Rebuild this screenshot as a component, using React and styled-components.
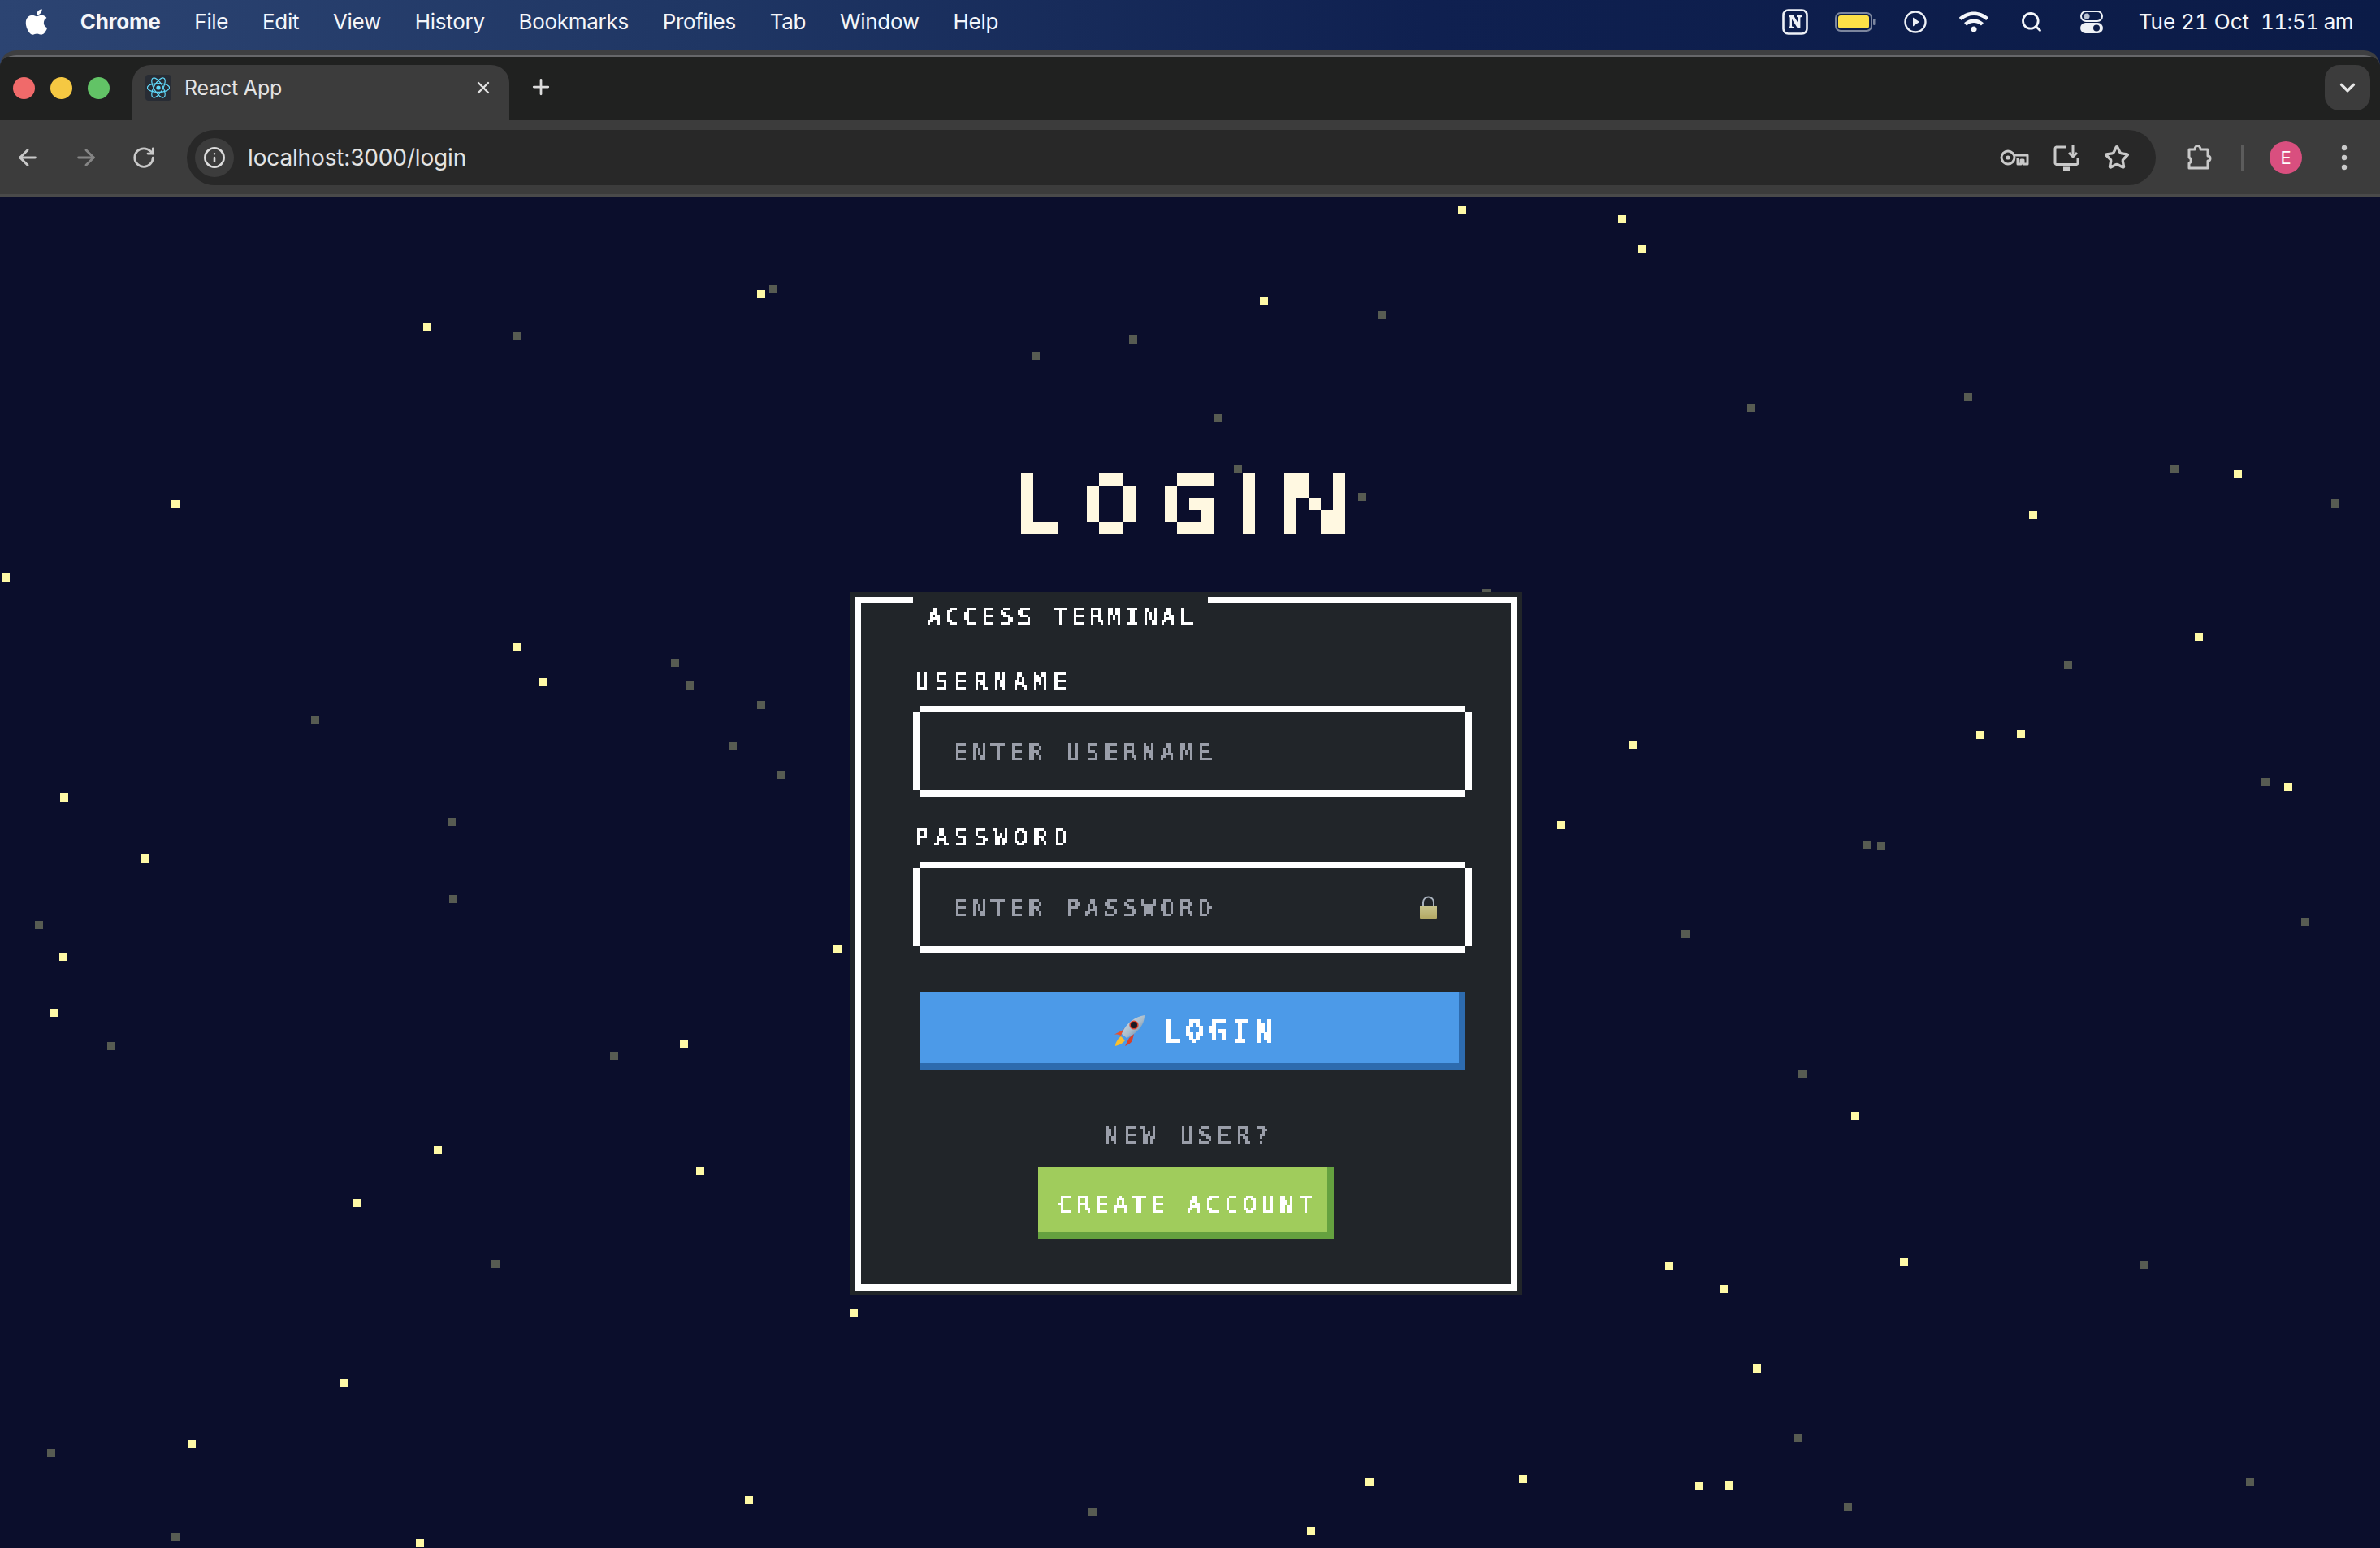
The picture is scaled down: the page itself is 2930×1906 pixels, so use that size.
import React from 'react';
import styled, { createGlobalStyle } from 'styled-components';
import { FaApple, FaWifi } from 'react-icons/fa';
import { ArrowLeft, ArrowRight, RotateCw, Info, X, Plus, ChevronDown, Search, Star as StarIcon } from 'lucide-react';

const Global = createGlobalStyle`
  html, body { margin: 0; padding: 0; background: #0b0e2c; }
  * { box-sizing: border-box; }
`;

const PIXEL_FILTERS = [
  { id: 'px-white', cell: 3, color: '#ffffff' },
  { id: 'px-gray', cell: 3, color: '#9a9ea9' },
  { id: 'px-login', cell: 4, color: '#ffffff' },
  { id: 'px-title', cell: 15, color: '#fff8e1' },
];

const PixelFilters = () => (
  <FilterDefs aria-hidden="true">
    <defs>
      {PIXEL_FILTERS.map(({ id, cell, color }) => {
        const c = Math.floor(cell / 2);
        return (
          <filter key={id} id={id} x="0" y="0" width="100%" height="100%" primitiveUnits="userSpaceOnUse" colorInterpolationFilters="sRGB">
            <feFlood x={c} y={c} width="1" height="1" floodColor="#000" result="dot" />
            <feComposite in="dot" in2="dot" width={cell} height={cell} x="0" y="0" result="cell" />
            <feTile in="cell" result="grid" />
            <feComposite in="SourceAlpha" in2="grid" operator="in" result="sampled" />
            <feComponentTransfer in="sampled" result="hard">
              <feFuncA type="discrete" tableValues="0 1" />
            </feComponentTransfer>
            <feMorphology in="hard" operator="dilate" radius={c} result="blocks" />
            <feFlood floodColor={color} result="ink" />
            <feComposite in="ink" in2="blocks" operator="in" />
          </filter>
        );
      })}
    </defs>
  </FilterDefs>
);

const FilterDefs = styled.svg`
  position: absolute;
  width: 0;
  height: 0;
`;

const Screen = styled.div`
  width: 2930px;
  height: 1906px;
  display: flex;
  flex-direction: column;
  overflow: hidden;
  background: linear-gradient(90deg, #2c4472 0%, #1f3664 30%, #0f2050 60%, #0b1b47 100%);
`;

const MenuBar = styled.header`
  height: 62px;
  flex: none;
  display: flex;
  align-items: center;
  justify-content: space-between;
  padding: 0 33px 8px 30px;
  color: #f4f6fa;
  font: 400 26px/1 Inter, "Liberation Sans", sans-serif;
`;

const MenuGroup = styled.nav`
  display: flex;
  align-items: center;
  gap: 41.8px;
`;

const AppleMark = styled(FaApple)`
  width: 30px;
  height: 36px;
  margin-right: -3px;
  color: #fff;
`;

const MenuItem = styled.span`
  font-weight: ${p => (p.$strong ? 700 : 400)};
  letter-spacing: -0.3px;
`;

const StatusGroup = styled.div`
  display: flex;
  align-items: center;
`;

const StatusSlot = styled.span`
  display: flex;
  margin-right: ${p => p.$after}px;
`;

const Clock = styled.span`
  display: flex;
  gap: 14px;
  white-space: pre;
  font-feature-settings: "tnum";
`;

const ClockPart = styled.span`
  letter-spacing: ${p => p.$track}px;
`;

const Browser = styled.div`
  flex: 1;
  display: flex;
  flex-direction: column;
  min-height: 0;
  border-radius: 20px 20px 0 0;
  overflow: hidden;
  background: #202120;
  border-top: 6px solid #3e3f41;
`;

const TabStrip = styled.div`
  height: 80px;
  flex: none;
  display: flex;
  align-items: flex-end;
  padding-left: 16px;
  background: #202120;
  border-top: 2px solid #66676a;
`;

const Light = styled.span`
  width: 27px;
  height: 27px;
  border-radius: 50%;
  background: ${p => p.$c};
  margin: 0 19px 26px 0;
  flex: none;
`;

const Tab = styled.div`
  width: 464px;
  height: 68px;
  margin-left: 9px;
  display: flex;
  align-items: center;
  padding: 0 20px 12px 16px;
  background: #3c3c3c;
  border-radius: 22px 22px 0 0;
  color: #e3e3e3;
  font: 400 25px/1 Inter, "Liberation Sans", sans-serif;
  letter-spacing: -0.2px;
`;

const Favicon = styled.span`
  width: 32px;
  height: 32px;
  border-radius: 4px;
  background: #282c34;
  margin-right: 16px;
  display: flex;
`;

const TabTitle = styled.span`
  flex: 1;
`;

const TabButton = styled.span`
  display: flex;
  color: #dcdcdc;
  margin-left: ${p => p.$gap || 0}px;
  margin-bottom: ${p => p.$lift || 0}px;
`;

const TabSpacer = styled.div`
  flex: 1;
`;

const ExpandChip = styled.span`
  width: 56px;
  height: 56px;
  margin: 0 12px 12px 0;
  border-radius: 18px;
  background: #3c3c3c;
  display: flex;
  align-items: center;
  justify-content: center;
  color: #e6e6e6;
`;

const Toolbar = styled.div`
  height: 94px;
  flex: none;
  display: flex;
  align-items: center;
  padding: 0 0 0 18px;
  background: #3c3c3c;
  border-bottom: 3px solid #4a4a4a;
`;

const NavSlot = styled.span`
  width: 72px;
  display: flex;
  color: ${p => (p.$dim ? '#858585' : '#c9c9c9')};
`;

const Omnibox = styled.div`
  width: 2424px;
  height: 68px;
  margin-left: -4px;
  display: flex;
  align-items: center;
  padding: 0 32px 0 10px;
  border-radius: 34px;
  background: #282828;
`;

const InfoChip = styled.span`
  width: 48px;
  height: 48px;
  border-radius: 50%;
  background: #3c3c3c;
  color: #dcdcdc;
  display: flex;
  align-items: center;
  justify-content: center;
  margin-right: 17px;
`;

const Url = styled.span`
  flex: 1;
  color: #e3e3e3;
  font: 400 28px/1 Inter, "Liberation Sans", sans-serif;
  letter-spacing: -0.15px;
`;

const OmniIcons = styled.div`
  display: flex;
  align-items: center;
  gap: 30px;
  color: #c9c9c9;
`;

const ToolEnd = styled.div`
  flex: 1;
  display: flex;
  align-items: center;
  padding-left: 38px;
  color: #c9c9c9;
`;

const ToolDivider = styled.span`
  width: 3px;
  height: 32px;
  background: #5c5c5c;
  margin: 0 32px 0 35px;
`;

const Avatar = styled.span`
  width: 40px;
  height: 40px;
  border-radius: 50%;
  background: #d94f7f;
  color: #fff;
  font: 400 22px/40px Inter, "Liberation Sans", sans-serif;
  text-align: center;
  margin-right: 48px;
`;

const Page = styled.main`
  flex: 1;
  position: relative;
  display: flex;
  flex-direction: column;
  align-items: center;
  padding: 0 10px 0 0;
  background: #0b0e2c;
  overflow: hidden;
`;

const StarDot = styled.i.attrs(p => ({
  style: { left: `${Math.round(p.$x * SCALE - 4)}px`, top: `${Math.round(p.$y * SCALE - 246)}px` },
}))`
  position: absolute;
  width: 10px;
  height: 10px;
  background: ${p => (p.$dim ? '#575b52' : '#fff9a6')};
`;

const Title = styled.h1`
  position: relative;
  margin: 341px 7px 0 0;
  height: 75px;
  display: flex;
  gap: 36px;
  font: 700 103px/75px "Liberation Sans", sans-serif;
  color: #fff8e1;
  -webkit-text-stroke: 2px #fff8e1;
`;

const TitleCell = styled.span`
  display: block;
  width: ${p => p.$w}px;
  height: 75px;
  filter: url(#px-title);
`;

const TitleGlyph = styled.span`
  display: inline-block;
  transform-origin: 0 0;
  transform: translateX(${p => -p.$dx * p.$sx}px) scaleX(${p => p.$sx});
`;

const Card = styled.form`
  position: relative;
  width: 816px;
  height: 854px;
  margin-top: 77px;
  padding: 82px 48px 0 64px;
  background: #212529;
  border: 8px solid #fff;
  box-shadow: 0 0 0 6px #212529;
  display: flex;
  flex-direction: column;
`;

const Legend = styled.div`
  position: absolute;
  left: 64px;
  top: -8px;
  width: 363px;
  height: 34px;
  background: #212529;
  padding: 10px 0 0 18px;
`;

const PixelText = styled.span`
  display: inline-block;
  white-space: nowrap;
  font: 400 ${p => p.$size || 28}px/${p => p.$line || 30}px "DejaVu Sans Mono", monospace;
  -webkit-text-stroke: 0.8px ${p => (p.$gray ? '#9a9ea9' : '#fff')};
  letter-spacing: ${p => p.$track ?? 6.3}px;
  color: ${p => (p.$gray ? '#9a9ea9' : '#fff')};
  filter: url(${p => p.$filter || (p.$gray ? '#px-gray' : '#px-white')});
`;

const NewUserText = styled(PixelText)`
  margin-left: 7px;
`;

const Field = styled.div`
  display: flex;
  flex-direction: column;
  align-items: flex-start;
  margin-bottom: ${p => p.$after}px;
`;

const FieldLabel = styled.label`
  margin: 0 0 14px 2px;
  display: flex;
`;

const InputFrame = styled.div`
  align-self: stretch;
  margin: 8px;
  height: 96px;
  display: flex;
  align-items: center;
  padding: 0 35px 0 42px;
  background: #212529;
  box-shadow: 8px 0 #fff, -8px 0 #fff, 0 8px #fff, 0 -8px #fff;
`;

const Hint = styled.div`
  flex: 1;
  display: flex;
  padding-top: ${p => p.$drop}px;
`;

const PrimaryButton = styled.button`
  align-self: stretch;
  margin: 0 8px;
  height: 96px;
  flex: none;
  border: 0;
  padding: 0 0 0 8px;
  display: flex;
  align-items: center;
  justify-content: center;
  gap: 22px;
  background: #4c9ae8;
  box-shadow: inset -8px -8px 0 #2d6bae;
`;

const Footer = styled.div`
  margin-top: 67px;
  display: flex;
  flex-direction: column;
  align-items: center;
  gap: 23px;
  transform: translateX(-8px);
`;

const SecondaryButton = styled.button`
  width: 364px;
  height: 88px;
  border: 0;
  padding: 6px 0 0 4px;
  display: flex;
  align-items: center;
  justify-content: center;
  background: #a0cc5c;
  box-shadow: inset -8px -8px 0 #65a13f;
`;

const SCALE = 2930 / 1568;

const TITLE_LETTERS = [
  { ch: 'L', w: 45, sx: 0.857, dx: 7.5 },
  { ch: 'O', w: 60, sx: 0.83, dx: 4 },
  { ch: 'G', w: 60, sx: 0.87, dx: 5 },
  { ch: 'I', w: 15, sx: 1, dx: 7 },
  { ch: 'N', w: 75, sx: 1.25, dx: 7 },
];

const BRIGHT = [[963,138],[1068,144],[1081,164],[832,198],[501,193],[281,215],[115,332],[3,380],[340,426],[357,449],[42,525],[95,565],[41,630],[35,667],[551,625],[450,687],[288,757],[461,771],[235,792],[226,911],[126,951],[493,988],[276,1016],[562,865],[902,976],[1003,974],[863,1008],[1119,979],[1139,978],[1157,901],[1135,849],[1099,834],[1254,831],[1222,735],[1075,490],[1028,543],[1304,484],[1331,483],[1448,419],[1507,518],[1474,312],[1339,339],[675,333]];
const DIM = [[509,190],[340,221],[682,234],[746,223],[910,207],[802,275],[815,308],[897,327],[1153,268],[1296,261],[1432,308],[1538,331],[1362,438],[1492,515],[1518,607],[1229,556],[1239,557],[1110,615],[1187,707],[1412,833],[1184,947],[1482,976],[1217,992],[719,996],[115,1012],[33,957],[326,832],[73,689],[404,695],[25,609],[298,592],[297,541],[207,474],[444,436],[454,451],[501,464],[482,491],[514,510],[979,390]];

const NotionIcon = () => (
  <svg width="32" height="32" viewBox="0 0 32 32">
    <rect x="1.5" y="1.5" width="29" height="29" rx="6" fill="none" stroke="#eef1f6" strokeWidth="2.6" />
    <path d="M9 8h5l6 10V10.5L18 10V8h6v2l-1.6.5V24h-3.2L12 12.5V21.5l2 .5v2H8v-2l1.6-.5V10.5L9 10z" fill="#eef1f6" />
  </svg>
);
const BatteryIcon = () => (
  <svg width="50" height="24" viewBox="0 0 50 24">
    <rect x="1" y="1" width="44" height="22" rx="6" fill="none" stroke="#7c869e" strokeWidth="2" />
    <rect x="4" y="4" width="38" height="16" rx="3" fill="#fde047" />
    <rect x="47" y="8" width="2.5" height="8" rx="1.2" fill="#7c869e" />
  </svg>
);
const PlayIcon = () => (
  <svg width="28" height="28" viewBox="0 0 28 28">
    <circle cx="14" cy="14" r="12.5" fill="none" stroke="#eef1f6" strokeWidth="2.4" />
    <path d="M11 8.5l8 5.5-8 5.5z" fill="#eef1f6" />
  </svg>
);
const ControlIcon = () => (
  <svg width="28" height="28" viewBox="0 0 28 28">
    <rect x="1" y="1" width="26" height="12" rx="6" fill="none" stroke="#eef1f6" strokeWidth="2" />
    <circle cx="8" cy="7" r="3.6" fill="#b8c0d0" />
    <rect y="15" width="28" height="13" rx="6.5" fill="#eef1f6" />
    <circle cx="20" cy="21.5" r="4" fill="#0c1c48" />
  </svg>
);
const ReactGlyph = () => (
  <svg width="32" height="32" viewBox="-16 -16 32 32" fill="none" stroke="#61dafb" strokeWidth="1.2">
    <circle r="2.6" fill="#61dafb" stroke="none" />
    <ellipse rx="13.5" ry="5.4" />
    <ellipse rx="13.5" ry="5.4" transform="rotate(60)" />
    <ellipse rx="13.5" ry="5.4" transform="rotate(120)" />
  </svg>
);
const KeyIcon = () => (
  <svg width="36" height="22" viewBox="0 0 36 22" fill="none" stroke="#c9c9c9" strokeWidth="3">
    <circle cx="10" cy="11" r="8" />
    <circle cx="10" cy="11" r="2.6" fill="#c9c9c9" stroke="none" />
    <path d="M18 8h16v11h-5v-5h-3v5h-4v-8" strokeLinejoin="round" />
  </svg>
);
const InstallIcon = () => (
  <svg width="32" height="32" viewBox="0 0 32 32" fill="none" stroke="#c9c9c9" strokeWidth="3">
    <path d="M16 3H3.5a2 2 0 0 0-1.5 2v18a2 2 0 0 0 1.5 1.5h25a2 2 0 0 0 1.5-1.5V16" />
    <path d="M24 1v13M19 10l5 5 5-5" />
    <path d="M12 30h8" strokeWidth="5" />
  </svg>
);
const PuzzleIcon = () => (
  <svg width="32" height="34" viewBox="0 0 32 34" fill="none" stroke="#c9c9c9" strokeWidth="3" strokeLinejoin="round">
    <path d="M3 7h7c0-6 7-6 7 0h9v8c4 0 4 6 0 6v9H3v-6c3-1 3-6 0-7z" />
  </svg>
);
const DotsIcon = () => (
  <svg width="8" height="34" viewBox="0 0 8 34" fill="#c9c9c9">
    <circle cx="4" cy="5" r="3.2" />
    <circle cx="4" cy="17" r="3.2" />
    <circle cx="4" cy="29" r="3.2" />
  </svg>
);
const LockIcon = () => (
  <svg width="21" height="28" viewBox="0 0 21 28">
    <defs>
      <linearGradient id="lockBody" x1="0" y1="0" x2="0" y2="1">
        <stop offset="0" stopColor="#c9c58f" />
        <stop offset="1" stopColor="#b3a863" />
      </linearGradient>
    </defs>
    <path d="M4 15V8a6.5 6.5 0 0 1 13 0v7" fill="none" stroke="#a9b2bd" strokeWidth="2" />
    <rect x="0" y="12" width="21" height="16" rx="1" fill="url(#lockBody)" />
  </svg>
);
const RocketIcon = () => (
  <svg width="40" height="40" viewBox="0 0 40 40">
    <defs>
      <linearGradient id="rocketHull" x1="0" y1="0" x2="1" y2="1">
        <stop offset="0" stopColor="#dfe5ea" />
        <stop offset="0.55" stopColor="#a9bccb" />
        <stop offset="1" stopColor="#4f7396" />
      </linearGradient>
    </defs>
    <path d="M11 20L1 25c3-1 7 0 9 1l4-9z" fill="#e8502a" />
    <path d="M20 29l-5 10c4-2 8-4 9-7l2-8z" fill="#d9412a" />
    <path d="M10 27c-4 3-7 8-7 12 4-1 9-3 12-7z" fill="#fbc02d" />
    <path d="M11 24C16 11 27 3 39 1c0 11-7 21-22 28z" fill="url(#rocketHull)" />
    <circle cx="26" cy="13" r="4.8" fill="#1a1a22" stroke="#d9412a" strokeWidth="1.6" />
  </svg>
);

const MENU = ['File', 'Edit', 'View', 'History', 'Bookmarks', 'Profiles', 'Tab', 'Window', 'Help'];

export default function App() {
  return (
    <Screen>
      <Global />
      <PixelFilters />
      <MenuBar>
        <MenuGroup>
          <AppleMark />
          <MenuItem $strong>Chrome</MenuItem>
          {MENU.map(m => <MenuItem key={m}>{m}</MenuItem>)}
        </MenuGroup>
        <StatusGroup>
          <StatusSlot $after={33}><NotionIcon /></StatusSlot>
          <StatusSlot $after={35}><BatteryIcon /></StatusSlot>
          <StatusSlot $after={40}><PlayIcon /></StatusSlot>
          <StatusSlot $after={39}><FaWifi size={36} /></StatusSlot>
          <StatusSlot $after={46}><Search size={28} strokeWidth={2.4} /></StatusSlot>
          <StatusSlot $after={44}><ControlIcon /></StatusSlot>
          <Clock>
            <ClockPart $track={0}>Tue 21 Oct</ClockPart>
            <ClockPart $track={-0.6}>11:51 am</ClockPart>
          </Clock>
        </StatusGroup>
      </MenuBar>
      <Browser>
        <TabStrip>
          <Light $c="#f06a6a" />
          <Light $c="#f5c842" />
          <Light $c="#62c366" />
          <Tab>
            <Favicon><ReactGlyph /></Favicon>
            <TabTitle>React App</TabTitle>
            <X size={24} strokeWidth={2.4} />
          </Tab>
          <TabButton $gap={24} $lift={26}><Plus size={30} strokeWidth={2.2} /></TabButton>
          <TabSpacer />
          <ExpandChip><ChevronDown size={30} strokeWidth={2.6} /></ExpandChip>
        </TabStrip>
        <Toolbar>
          <NavSlot><ArrowLeft size={32} strokeWidth={2.2} /></NavSlot>
          <NavSlot $dim><ArrowRight size={32} strokeWidth={2.2} /></NavSlot>
          <NavSlot><RotateCw size={30} strokeWidth={2.2} /></NavSlot>
          <Omnibox>
            <InfoChip><Info size={28} strokeWidth={2.2} /></InfoChip>
            <Url>localhost:3000/login</Url>
            <OmniIcons>
              <KeyIcon />
              <InstallIcon />
              <StarIcon size={32} strokeWidth={2.6} />
            </OmniIcons>
          </Omnibox>
          <ToolEnd>
            <PuzzleIcon />
            <ToolDivider />
            <Avatar>E</Avatar>
            <DotsIcon />
          </ToolEnd>
        </Toolbar>
        <Page>
          {BRIGHT.map(([x, y]) => <StarDot key={`b${x}-${y}`} $x={x} $y={y} />)}
          {DIM.map(([x, y]) => <StarDot key={`d${x}-${y}`} $x={x} $y={y} $dim />)}
          <Title>
            {TITLE_LETTERS.map(({ ch, w, sx, dx }) => (
              <TitleCell key={ch} $w={w}><TitleGlyph $sx={sx} $dx={dx}>{ch}</TitleGlyph></TitleCell>
            ))}
          </Title>
          <Card onSubmit={e => e.preventDefault()}>
            <Legend><PixelText $track={5.3}>ACCESS TERMINAL</PixelText></Legend>
            <Field $after={36}>
              <FieldLabel><PixelText $track={7.4}>USERNAME</PixelText></FieldLabel>
              <InputFrame><Hint $drop={4}><PixelText $gray>ENTER USERNAME</PixelText></Hint></InputFrame>
            </Field>
            <Field $after={48}>
              <FieldLabel><PixelText $track={7.6}>PASSWORD</PixelText></FieldLabel>
              <InputFrame>
                <Hint $drop={4}><PixelText $gray>ENTER PASSWORD</PixelText></Hint>
                <LockIcon />
              </InputFrame>
            </Field>
            <PrimaryButton type="button">
              <RocketIcon />
              <PixelText $size={34} $line={36} $track={8} $filter="#px-login">LOGIN</PixelText>
            </PrimaryButton>
            <Footer>
              <NewUserText $gray>NEW USER?</NewUserText>
              <SecondaryButton type="button"><PixelText $track={5.9}>CREATE ACCOUNT</PixelText></SecondaryButton>
            </Footer>
          </Card>
        </Page>
      </Browser>
    </Screen>
  );
}
